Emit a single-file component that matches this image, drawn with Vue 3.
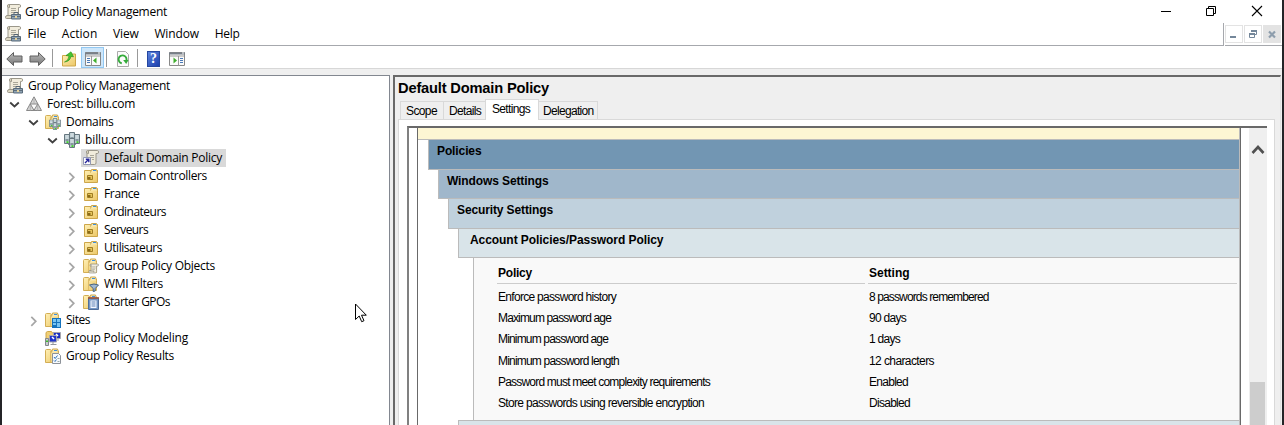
<script setup>
const vFit = {
  mounted(el, { value }) {
    const natural = el.getBoundingClientRect().width
    const gap = (value - natural) / el.textContent.length
    el.style.letterSpacing = gap.toFixed(3) + 'px'
  },
}

const menus = [
  { text: 'File', w: 18.5 },
  { text: 'Action', w: 35.5 },
  { text: 'View', w: 25.5 },
  { text: 'Window', w: 44.5 },
  { text: 'Help', w: 25 },
]

const tree = [
  { text: 'Group Policy Management', w: 142, level: 0, icon: 'console', root: true },
  { text: 'Forest: billu.com', w: 88, level: 0, icon: 'forest', open: true },
  { text: 'Domains', w: 47.5, level: 1, icon: 'domains', open: true },
  { text: 'billu.com', w: 50, level: 2, icon: 'domain', open: true },
  { text: 'Default Domain Policy', w: 118, level: 3, icon: 'link', selected: true },
  { text: 'Domain Controllers', w: 103, level: 3, icon: 'ou', closed: true },
  { text: 'France', w: 35.5, level: 3, icon: 'ou', closed: true },
  { text: 'Ordinateurs', w: 62, level: 3, icon: 'ou', closed: true },
  { text: 'Serveurs', w: 44, level: 3, icon: 'ou', closed: true },
  { text: 'Utilisateurs', w: 58, level: 3, icon: 'ou', closed: true },
  { text: 'Group Policy Objects', w: 111, level: 3, icon: 'gpos', closed: true },
  { text: 'WMI Filters', w: 59, level: 3, icon: 'wmi', closed: true },
  { text: 'Starter GPOs', w: 66, level: 3, icon: 'starter', closed: true },
  { text: 'Sites', w: 24, level: 1, icon: 'sites', closed: true },
  { text: 'Group Policy Modeling', w: 122, level: 1, icon: 'modeling' },
  { text: 'Group Policy Results', w: 108, level: 1, icon: 'results' },
]

const tabs = [
  { text: 'Scope', w: 31, cls: 'scope' },
  { text: 'Details', w: 32, cls: 'details' },
  { text: 'Settings', w: 38, cls: 'settings' },
  { text: 'Delegation', w: 50.5, cls: 'delegation' },
]

const sections = [
  { text: 'Policies', w: 44.5, cls: 's1' },
  { text: 'Windows Settings', w: 101.5, cls: 's2' },
  { text: 'Security Settings', w: 96, cls: 's3' },
  { text: 'Account Policies/Password Policy', w: 193.5, cls: 's4' },
]

const policies = [
  { name: 'Enforce password history', nw: 118, value: '8 passwords remembered', vw: 119.5 },
  { name: 'Maximum password age', nw: 113, value: '90 days', vw: 37 },
  { name: 'Minimum password age', nw: 110, value: '1 days', vw: 31 },
  { name: 'Minimum password length', nw: 121, value: '12 characters', vw: 65 },
  { name: 'Password must meet complexity requirements', nw: 212, value: 'Enabled', vw: 39 },
  { name: 'Store passwords using reversible encryption', nw: 206, value: 'Disabled', vw: 41 },
]
</script>

<template>
  <svg class="defs" width="0" height="0" aria-hidden="true">
    <defs>
      <linearGradient id="gFolder" x1="0" y1="0" x2="1" y2="1">
        <stop offset="0" stop-color="#fff0b5" /><stop offset="1" stop-color="#ecc766" />
      </linearGradient>
      <linearGradient id="gArrow" x1="0" y1="0" x2="0" y2="1">
        <stop offset="0" stop-color="#bbb" /><stop offset="1" stop-color="#777" />
      </linearGradient>
      <symbol id="scroll" viewBox="0 0 16 16">
        <path d="M4.500 1.500h9.300a1.500 1.500 0 0 1 0 3h-1.300v8a2 2 0 0 1-2 2h-8a2 2 0 0 1-.5-3.500h2.500z" fill="#f1ecdc" stroke="#8d8a80" />
        <path d="M4.500 1.500a1.500 1.500 0 0 0-1.500 1.500v1.500h2M2 11.500h6.500v2.500" fill="#d9d3bd" stroke="#8d8a80" />
        <path d="M6 5.500h5M6 7.500h5M6 9.500h4" stroke="#aaa799" />
      </symbol>
      <symbol id="folder" viewBox="0 0 16 16">
        <path d="M.5 2.500q0-1 1-1h4l1 1.500h7v11.500h-13z" fill="url(#gFolder)" stroke="#d3ae55" />
        <path d="M6.500 4.500l1-3.500h5l1 3.500" fill="#f8e9b4" stroke="#cda64a" />
        <path d="M9 2.500h3" stroke="#3b8fe0" />
        <path d="M5.500 3v11" stroke="#e0bd68" />
      </symbol>
      <symbol id="tower" viewBox="0 0 6 10">
        <path d="M.5.5h5v9h-5z" fill="#b6c6cc" stroke="#66777f" />
        <path d="M1.500 2h3M1.500 4h3" stroke="#e4edf0" />
        <path d="M1.500 6h3" stroke="#566970" />
        <path d="M2.500 7.200h2v1.800h-2z" fill="#42d42c" />
      </symbol>

      <symbol id="i-console" viewBox="0 0 16 16">
        <path d="M3.500.5h11q1 0 1 1.500t-1 1.500h-1V12H3V2z" fill="#f1ecdc" stroke="#9b978a" />
        <path d="M3.500.5Q2.500.5 2.500 2t1 1.500h1V1M.5 13.500q0-2 1.500-2h5v3H1.500q-1 0-1-1z" fill="#ddd7c2" stroke="#9b978a" />
        <path d="M6 4.500h5M6 6.500h5M6 8.500h3" stroke="#aaa799" />
        <path d="M6.500 10.500h9v4.500h-9z" fill="#90a4b4" stroke="#596b7b" />
        <path d="M9 10.500v-2h4v2" fill="none" stroke="#566674" />
        <path d="M7 12.500h8" stroke="#5d6d7a" /><path d="M10 12h2v2h-2z" fill="#e8d39a" />
      </symbol>
      <symbol id="i-forest" viewBox="0 0 16 16">
        <path d="M8 .8L15.500 14.500H.5z" fill="#d4d4d4" stroke="#888" />
        <path d="M4.300 8h7.400L8 14.300z" fill="#fafafa" stroke="#888" />
        <path d="M8 2v6M4.300 9v5.500M11.700 9v5.500" stroke="#aaa" stroke-width=".8" />
      </symbol>
      <symbol id="i-domain" viewBox="0 0 16 16">
        <path d="M4 4.500h8M4 12.500h8" stroke="#84949a" />
        <use href="#tower" x="5" y="0" width="6" height="10" />
        <use href="#tower" x="0" y="2" width="6" height="10" />
        <use href="#tower" x="10" y="2" width="6" height="10" />
        <use href="#tower" x="5" y="6" width="6" height="10" />
      </symbol>
      <symbol id="i-domains" viewBox="0 0 16 16">
        <use href="#folder" width="16" height="16" />
        <use href="#i-domain" x="4" y="4" width="12" height="12" />
      </symbol>
      <symbol id="i-link" viewBox="0 0 16 16">
        <path d="M4.500.5h10q1 0 1 1.500t-1 1.500h-1.500V13q0 1.500-1.500 1.500H4V2z" fill="#f1ecdc" stroke="#9b978a" />
        <path d="M4.500.5Q3.500.5 3.500 2t1 1.500h1V1" fill="#ddd7c2" stroke="#9b978a" />
        <path d="M7 5.500h4M7 7.500h4M9 9.500h2" stroke="#aaa799" />
        <path d="M.5 7.500h7v7h-7z" fill="#fff" stroke="#9097b5" />
        <path d="M2 13l3.500-3.500M2.800 9.300h3v3" fill="none" stroke="#25259b" stroke-width="1.400" />
      </symbol>
      <symbol id="i-ou" viewBox="0 0 16 16">
        <path d="M1.500 2.500h13v12h-13z" fill="url(#gFolder)" stroke="#cda64a" />
        <path d="M7.500 4.500l1-3h5l1 3" fill="#f8e9b4" stroke="#cda64a" />
        <path d="M10 2.500h3" stroke="#3b8fe0" />
        <path d="M4.500 7.500h5v4h-5z" fill="#e6c45b" stroke="#a07d22" />
        <path d="M5 9h2.500v2H5z" fill="#8a6a17" />
      </symbol>
      <symbol id="i-gpos" viewBox="0 0 16 16">
        <use href="#folder" width="16" height="16" />
        <use href="#scroll" x="5" y="5" width="11" height="11" />
      </symbol>
      <symbol id="i-wmi" viewBox="0 0 16 16">
        <use href="#folder" width="16" height="16" />
        <path d="M6.500 9q4.500-2 9 0l-3.300 3.500v2.500l-2 .5v-3z" fill="#9fb8d2" stroke="#48637f" />
      </symbol>
      <symbol id="i-starter" viewBox="0 0 16 16">
        <use href="#folder" width="16" height="16" />
        <path d="M5.500 4h10v11.500h-10z" fill="#7396c4" stroke="#4f6d98" />
        <path d="M5 4h11" stroke="#a3502f" stroke-width="1.500" />
        <path d="M7.500 6.500h6v7.500h-6z" fill="#f4f8ff" />
        <path d="M8.500 8h4M8.500 10h4M8.500 12h4" stroke="#5b80b5" />
      </symbol>
      <symbol id="i-sites" viewBox="0 0 16 16">
        <use href="#folder" width="16" height="16" />
        <path d="M7 6h9v10h-9z" fill="#1673bd" />
        <path d="M8 7h3v3h-3zM12 7h3v3h-3zM8 11h3v2h-3zM12 11h3v4h-3z" fill="#79c5f2" />
      </symbol>
      <symbol id="i-modeling" viewBox="0 0 16 16">
        <path d="M1 9V2.500l1.500-1h4l1 1.500h3v7H1z" fill="#f0cf74" stroke="#cda64a" />
        <path d="M8.500 2.500h7v6h-7z" fill="#1a2fc0" stroke="#a6a6ad" />
        <path d="M4.500 5.500h7v6.500h-7z" fill="#2035c9" stroke="#a6a6ad" />
        <path d="M7 7l2 2M11 4l2 2" stroke="#fff" stroke-width="1.500" />
        <path d="M.5 8.500h3v7h-3z" fill="#c9ccd0" stroke="#83878c" />
        <path d="M1 10.500h2v1.500H1z" fill="#3dbf2e" />
        <path d="M8 12v2M5.500 14.500h6M13 9v2" stroke="#93969c" />
      </symbol>
      <symbol id="i-results" viewBox="0 0 16 16">
        <use href="#folder" width="16" height="16" />
        <path d="M7.500 5.500h6l2 2v8h-8z" fill="#f7f9fc" stroke="#8d9299" />
        <path d="M9 9l1.200 1.500L12.500 7.500M9 12.500l1 1 1.500-2" fill="none" stroke="#2c72ba" />
        <path d="M12.500 10.500h2M12.500 13.500h2" stroke="#9aa" />
      </symbol>
    </defs>
  </svg>

  <div class="window">
    <header class="titlebar">
      <svg class="ico"><use href="#i-console" /></svg>
      <span v-fit="142" class="title">Group Policy Management</span>
      <svg class="winbtns" width="104" height="22" viewBox="0 0 104 22">
        <path d="M1 10.500h10M46.500 7.500h7v7h-7zM48.500 7v-1.500h7v7h-1.500" fill="none" stroke="#000" />
        <path d="M92 5l10 10M102 5l-10 10" stroke="#000" stroke-width="1.100" />
      </svg>
    </header>

    <div class="menubar">
      <nav class="menus">
        <svg class="ico"><use href="#i-console" /></svg>
        <span v-for="m in menus" :key="m.text" class="menu"><span v-fit="m.w">{{ m.text }}</span></span>
      </nav>
      <div class="mdi">
        <span class="mbtn"><svg viewBox="0 0 18 18"><path d="M5 11h6v2H5z" fill="#74879a" /></svg></span>
        <span class="mbtn"><svg viewBox="0 0 18 18"><path d="M7.500 7V6h5v3.500H11M5.500 8.500h5v4h-5z" fill="none" stroke="#74879a" /><path d="M7 6h6M5 9h6" stroke="#74879a" stroke-width="2" /></svg></span>
        <span class="mbtn off"><svg viewBox="0 0 18 18"><path d="M6 6.500l6 6M12 6.500l-6 6" stroke="#8d9dac" stroke-width="2.200" /></svg></span>
      </div>
    </div>

    <div class="toolbar">
      <svg class="t-arrow" viewBox="0 0 17 16"><path d="M.8 8L7.500 1.500v3.500h8.500v6H7.500v3.500z" fill="url(#gArrow)" stroke="#606060" /></svg>
      <svg class="t-arrow t-fwd" viewBox="0 0 17 16"><path d="M16.200 8L9.500 1.500v3.500H1v6h8.500v3.500z" fill="url(#gArrow)" stroke="#606060" /></svg>
      <i class="sep"></i>
      <svg class="ico" viewBox="0 0 16 16">
        <path d="M1.500 4.500h5l1.500-1.500h6.500v12h-13z" fill="url(#gFolder)" stroke="#cda64a" />
        <path d="M3.500 11q4-1 4.500-6l-3-.5L10 .8l2.500 5-2.500-.4q-1 5-6.500 5.600z" fill="#46c532" stroke="#249018" stroke-width=".6" />
      </svg>
      <span class="pressed">
        <svg class="ico" viewBox="0 0 16 16">
          <path d="M.5 1.500h15v13H.5z" fill="#fbfbfb" stroke="#888" />
          <path d="M0 2.500h16" stroke="#777f88" stroke-width="2" /><path d="M1 5h14M6.500 5v9.500" stroke="#999" />
          <path d="M2 7.500h3M2 9.500h3M2 11.500h3" stroke="#4a7ab8" />
          <path d="M11.500 6.500v6L8 9.500z" fill="#3eae2c" /><path d="M13 2h2" stroke="#fff" />
        </svg>
      </span>
      <i class="sep s2"></i>
      <svg class="ico" viewBox="0 0 16 16">
        <path d="M2.500.5h8l3 3v12h-11z" fill="#fbfbfb" stroke="#aaa" />
        <path d="M6.800 12.300a4 4 0 1 1 4.500-2.500" fill="none" stroke="#34ab3a" stroke-width="1.900" />
        <path d="M8.200 9h5.300l-2.300 4z" fill="#34ab3a" />
      </svg>
      <i class="sep s3"></i>
      <span class="help">?</span>
      <svg class="ico last" viewBox="0 0 16 16">
        <path d="M.5 1.500h15v13H.5z" fill="#fbfbfb" stroke="#888" />
        <path d="M0 2.500h16" stroke="#777f88" stroke-width="2" /><path d="M1 5h14M9.500 5v9.500" stroke="#999" />
        <path d="M11 7.500h3M11 9.500h3M11 11.500h3" stroke="#4a7ab8" />
        <path d="M4.500 6.500v6L8 9.500z" fill="#3eae2c" /><path d="M13 2h2" stroke="#fff" />
      </svg>
    </div>

    <main class="body">
      <aside class="tree">
        <div v-for="n in tree" :key="n.text" class="node" :class="['l' + n.level, { root: n.root }]">
          <svg v-if="!n.root" class="chev" viewBox="0 0 14 18">
            <path v-if="n.open" d="M3.200 7.500L7.500 11.500l4.300-4" fill="none" stroke="#404040" stroke-width="1.800" />
            <path v-if="n.closed" d="M5.300 5.800L9.800 10.300l-4.500 4.500" fill="none" stroke="#a6a6a6" stroke-width="1.700" />
          </svg>
          <span class="label" :class="{ selected: n.selected }">
            <svg class="ico"><use :href="'#i-' + n.icon" /></svg>
            <span v-fit="n.w">{{ n.text }}</span>
          </span>
        </div>
        <svg class="cursor" width="13" height="20" viewBox="0 0 13 20">
          <path d="M.5 1v15.500l3.700-3.500 2.500 5.700 2.300-1-2.500-5.500h4.800z" fill="#fff" stroke="#000" />
        </svg>
      </aside>

      <section class="detail">
        <h1><span v-fit="151">Default Domain Policy</span></h1>
        <div class="tabs">
          <span v-for="t in tabs" :key="t.text" class="tab" :class="t.cls"><span v-fit="t.w">{{ t.text }}</span></span>
        </div>
        <div class="page">
          <div class="browser">
            <div class="report">
              <div class="yellow"></div>
              <div v-for="s in sections" :key="s.text" class="sec" :class="s.cls"><span v-fit="s.w">{{ s.text }}</span></div>
              <div class="table">
                <div class="row head">
                  <span><b v-fit="34">Policy</b></span><span><b v-fit="40.500">Setting</b></span>
                </div>
                <div v-for="p in policies" :key="p.name" class="row">
                  <span><span v-fit="p.nw">{{ p.name }}</span></span><span><span v-fit="p.vw">{{ p.value }}</span></span>
                </div>
              </div>
              <div class="next"></div>
            </div>
            <div class="track">
              <svg width="18" height="36" viewBox="0 0 18 36"><path d="M3.500 25l5.500-6 5.500 6" fill="none" stroke="#505050" stroke-width="2.600" /></svg>
              <div class="thumb"></div>
            </div>
          </div>
        </div>
      </section>
    </main>
  </div>
</template>

<style>
body { margin: 0; overflow: hidden; }
</style>

<style scoped>
* { box-sizing: border-box; }
svg { display: block; flex: none; }
.defs { position: absolute; }
.window {
  width: 1284px; height: 425px; overflow: hidden;
  display: flex; flex-direction: column;
  border-left: 2px solid #242427; border-right: 2px solid #242427;
  background: #fff; color: #000;
  font: 12px/18px "Open Sans", "Noto Sans", sans-serif;
  white-space: nowrap;
}
.ico { width: 16px; height: 16px; }
.titlebar { height: 23px; display: flex; align-items: center; padding-left: 3px; }
.title { margin-left: 4px; }
.winbtns { margin-left: auto; margin-right: 18px; }
.menubar { height: 23px; display: flex; gap: 1px; }
.menus { flex: 1; display: flex; align-items: center; padding-left: 3px; border-right: 1px solid #a6a8ad; border-bottom: 1px solid #a6a8ad; }
.menu { margin-left: 6.500px; margin-right: 9.300px; }
.mdi { width: 57px; display: flex; gap: 1px; padding-top: 2px; border-bottom: 1px solid #a6a8ad; }
.mbtn { width: 18px; height: 18px; border: 1px solid #e3e3e3; }
.mbtn svg { margin: -1px; width: 18px; height: 18px; }
.off { background: #e3e3e3; }
.toolbar { height: 23px; display: flex; align-items: center; padding-left: 4px; border-bottom: 1px solid #d7d7d7; }
.toolbar > .ico, .t-arrow, .help { margin-top: 3px; }
.t-arrow { width: 17px; height: 16px; }
.t-fwd { margin-left: 6px; }
.sep { width: 1px; height: 18px; margin: 2px 8px 0 6px; background: #999; }
.pressed { width: 23px; height: 21px; margin: 1px 0 0 4px; padding: 3px; background: #cde6fa; border: 1px solid #92c8f2; }
.sep.s2 { margin-left: 2px; }
.sep.s3 { margin-left: 6px; margin-right: 9px; }
.help { width: 13px; height: 16px; background: linear-gradient(135deg, #5c83dc, #1b3fae); border: 1px solid #2446a0; color: #fff; font: bold 14px/14px "Liberation Serif", serif; text-align: center; }
.last { margin-left: 9px; }
.body { flex: 1; min-height: 0; display: flex; gap: 3px; padding-top: 6px; background: #efefef; }
.tree { position: relative; width: 388px; background: #fff; border-top: 1px solid #828790; border-right: 1px solid #828790; padding-top: 1px; }
.node { height: 18px; display: flex; }
.l0 { padding-left: 5px; }
.l1 { padding-left: 24px; }
.l2 { padding-left: 43px; }
.l3 { padding-left: 62px; }
.chev { width: 14px; height: 18px; margin-right: 3px; }
.label { display: flex; align-items: center; gap: 5px; padding-left: 2px; height: 18px; padding-right: 4px; }
.label > span { line-height: 18px; }
.root .label { padding-left: 0; }
.selected { background: #d9d9d9; }
.cursor { position: absolute; left: 353px; top: 227px; }
.detail { flex: 1; display: flex; flex-direction: column; min-width: 0; margin-right: 1px; border: solid #696969; border-width: 2px 1px 0 2px; border-right-color: #e3e3e3; background: #efefef; }
h1 { margin: 0; height: 22px; padding-left: 3px; font: bold 14.670px/22px "Liberation Sans", Arial, sans-serif; }
.tabs { height: 20px; display: flex; align-items: flex-end; padding-left: 5px; font: 12px/18px "Liberation Sans", Arial, sans-serif; }
.tab { height: 18px; border: 1px solid #d9d9d9; border-bottom: 0; padding-left: 5px; }
.scope { width: 43px; border-right: 0; }
.details { width: 42px; padding-left: 5px; border-right: 0; }
.settings { width: 54px; height: 21px; background: #fff; padding-left: 6px; margin-bottom: -1px; position: relative; }
.delegation { width: 59px; padding-left: 4px; border-left: 0; }
.page { flex: 1; min-height: 0; margin: 0 5px 0 3px; padding: 6px 7px 0 8px; background: #fff; border: 1px solid #d9d9d9; border-bottom: 0; display: flex; }
.browser { flex: 1; display: flex; border-top: 2px solid #696969; border-left: 2px solid #808080; min-width: 0; }
.report { width: 824px; margin-left: 8px; border-left: 1px solid #696969; border-right: 1px solid #696969; font: 12px/18px "Liberation Sans", Arial, sans-serif; }
.report > div { border-right: 1px solid #bbb; }
.yellow { height: 12px; background: #fdf6d3; border-bottom: 1px solid #bbb; }
.sec { border-left: 1px solid #bbb; border-bottom: 1px solid #bbb; font-weight: bold; line-height: 23px; padding-left: 8px; }
.s1 { margin-left: 10px; height: 30px; background: #7296b3; }
.report .s2 { margin-left: 20px; height: 29px; background: #a0b7cb; }
.report .s3 { margin-left: 30px; height: 30px; background: #c0d1dd; }
.s4 { margin-left: 40px; height: 29px; background: #d9e4e9; padding-left: 11px; }
.table { margin-left: 55px; height: 162px; background: #f9f9f9; border-left: 1px solid #bbb; padding: 5px 2px 0 23px; }
.row { display: grid; grid-template-columns: 368px 369px; column-gap: 3px; height: 21.200px; line-height: 21.200px; padding-top: 2px; }
.row > span { padding-left: 1px; }
.head { height: 21px; line-height: 21px; padding-top: 0; margin-bottom: 1px; }
.head > span { height: 21px; border-bottom: 1px solid #ccc; }
.next { margin-left: 40px; height: 20px; background: #d9e4e9; border-left: 1px solid #bbb; border-top: 1px solid #bbb; }
.track { width: 18px; margin-left: 8px; background: #efefef; }
.thumb { width: 15px; height: 60px; margin: 218px 0 0 1px; background: #cdcdcd; }
</style>
